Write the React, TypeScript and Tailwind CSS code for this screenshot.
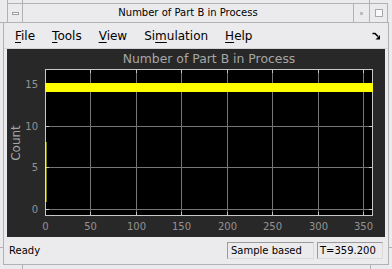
import React from "react";

const xTicks = [0, 50, 100, 150, 200, 250, 300, 350];
const yTicks = [0, 5, 10, 15];

// plot coordinates inside the dark panel
const px = (v: number) => Math.round(38 + v * 0.9094) + 0.5;
const py = (v: number) => Math.round(160 - v * 8.333) + 0.5;

function Scope() {
  return (
    <svg width="378" height="188" viewBox="0 0 378 188" className="block">
      <rect x="0" y="0" width="378" height="188" fill="#282828" />
      <text x="202" y="14" fill="#a6a6a6" fontSize="12.4" textAnchor="middle" fontFamily="DejaVu Sans, sans-serif">
        Number of Part B in Process
      </text>

      {/* axes */}
      <rect x="38.5" y="20.5" width="327" height="146" fill="#000" />
      {xTicks.slice(1).map((t) => (
        <line key={"gx" + t} x1={px(t)} y1="21" x2={px(t)} y2="166" stroke="#767676" strokeWidth="1" />
      ))}
      {yTicks.map((t) => (
        <line key={"gy" + t} x1="39" y1={py(t)} x2="365" y2={py(t)} stroke="#767676" strokeWidth="1" />
      ))}
      {yTicks.map((t) => (
        <g key={"ty" + t}>
          <line x1="39" y1={py(t)} x2="42" y2={py(t)} stroke="#c4c4c4" />
          <line x1="362" y1={py(t)} x2="365" y2={py(t)} stroke="#c4c4c4" />
        </g>
      ))}
      {xTicks.slice(1).map((t) => (
        <g key={"tx" + t}>
          <line x1={px(t)} y1="21" x2={px(t)} y2="24" stroke="#c4c4c4" />
          <line x1={px(t)} y1="163" x2={px(t)} y2="166" stroke="#c4c4c4" />
        </g>
      ))}
      <rect x="38.5" y="20.5" width="327" height="146" fill="none" stroke="#c8c8c8" strokeWidth="1" />

      {/* data */}
      <rect x="38" y="34" width="328" height="9" fill="#ffff00" />
      <rect x="38" y="93" width="1.5" height="60" fill="#ffff00" />

      {/* tick labels */}
      {yTicks.map((t) => (
        <text key={"ly" + t} x="31" y={py(t) + 3.5} fill="#939393" fontSize="10" textAnchor="end" fontFamily="DejaVu Sans, sans-serif">
          {t}
        </text>
      ))}
      {xTicks.map((t) => (
        <text key={"lx" + t} x={px(t)} y="181" fill="#939393" fontSize="10" textAnchor="middle" fontFamily="DejaVu Sans, sans-serif">
          {t}
        </text>
      ))}
      <text transform="translate(12.5 94) rotate(-90)" fill="#a6a6a6" fontSize="12" textAnchor="middle" fontFamily="DejaVu Sans, sans-serif">
        Count
      </text>
    </svg>
  );
}

function DockArrow() {
  return (
    <svg width="9" height="8" viewBox="0 0 9 8">
      <path d="M0.5 1.5 H3 L6 4.5" fill="none" stroke="#000" strokeWidth="1.6" />
      <path d="M8 7.5 L8 3 L3.5 7.5 Z" fill="#000" />
    </svg>
  );
}

export default function App() {
  const menus = [
    { pre: "", u: "F", post: "ile" },
    { pre: "", u: "T", post: "ools" },
    { pre: "", u: "V", post: "iew" },
    { pre: "Si", u: "m", post: "ulation" },
    { pre: "", u: "H", post: "elp" },
  ];

  return (
    <div className="relative w-[392px] h-[269px] overflow-hidden bg-[#ebebee] font-['DejaVu_Sans',sans-serif] text-black">
      {/* title bar */}
      <div className="ml-[7px] mt-[3px] flex h-[19px] w-[381px] border-t border-l border-r border-[#b2b2b6]">
        <div className="flex w-[15px] items-center justify-center border-r border-[#b2b2b6]">
          <div className="h-[3px] w-[7px] border border-[#9c9c9c] bg-white" />
        </div>
        <div className="flex-1 text-center text-[10px] leading-[18px]">Number of Part B in Process</div>
        <div className="flex w-[16px] items-center justify-center border-l border-[#b2b2b6]">
          <div className="h-[3px] w-[3px] bg-[#bdbdbd]" />
        </div>
        <div className="flex w-[18px] items-center justify-center border-l border-[#b2b2b6]">
          <div className="h-[8px] w-[8px] border border-[#a8a8a8] bg-[#fafafa]" />
        </div>
      </div>

      {/* window body */}
      <div className="ml-[3px] flex h-[243px] w-[386px] flex-col border border-[#b2b2b6]">
        <div className="flex h-[26px] items-center gap-[17px] border-b border-[#d4d4d8] pl-[11px] pr-[7px] text-[12px]">
          {menus.map((m) => (
            <span key={m.u + m.post}>
              {m.pre}
              <span className="underline underline-offset-2">{m.u}</span>
              {m.post}
            </span>
          ))}
          <span className="ml-auto flex items-center pt-[1px]">
            <DockArrow />
          </span>
        </div>

        <div className="ml-[3px] h-[188px] w-[378px]">
          <Scope />
        </div>

        <div className="flex h-[26px] items-start text-[10px]">
          <div className="flex-1 pl-[5px] pt-[6px]">Ready</div>
          <div className="mt-[5px] h-[17px] w-[87px] border border-t-[#9a9a9a] border-l-[#9a9a9a] border-b-[#dadada] border-r-[#dadada] pl-[3px] leading-[15px]">
            Sample based
          </div>
          <div className="ml-[3px] mr-[5px] mt-[5px] h-[17px] w-[66px] border border-t-[#9a9a9a] border-l-[#9a9a9a] border-b-[#dadada] border-r-[#dadada] pl-[2px] leading-[15px]">
            T=359.200
          </div>
        </div>
      </div>

      {/* resize handle stubs of the frame */}
      <div className="absolute left-0 top-[22px] h-px w-[3px] bg-[#b2b2b6]" />
      <div className="absolute left-[22px] top-[265px] h-[4px] w-px bg-[#b2b2b6]" />
      <div className="absolute left-[370px] top-[265px] h-[4px] w-px bg-[#b2b2b6]" />
      <div className="absolute left-0 top-[247px] h-px w-[3px] bg-[#b2b2b6]" />
      <div className="absolute right-0 top-[247px] h-px w-[3px] bg-[#b2b2b6]" />
      <div className="absolute left-[7px] top-0 h-[3px] w-px bg-[#b2b2b6]" />
      <div className="absolute left-[22px] top-0 h-[3px] w-px bg-[#b2b2b6]" />
      <div className="absolute left-[369px] top-0 h-[3px] w-px bg-[#b2b2b6]" />
    </div>
  );
}
